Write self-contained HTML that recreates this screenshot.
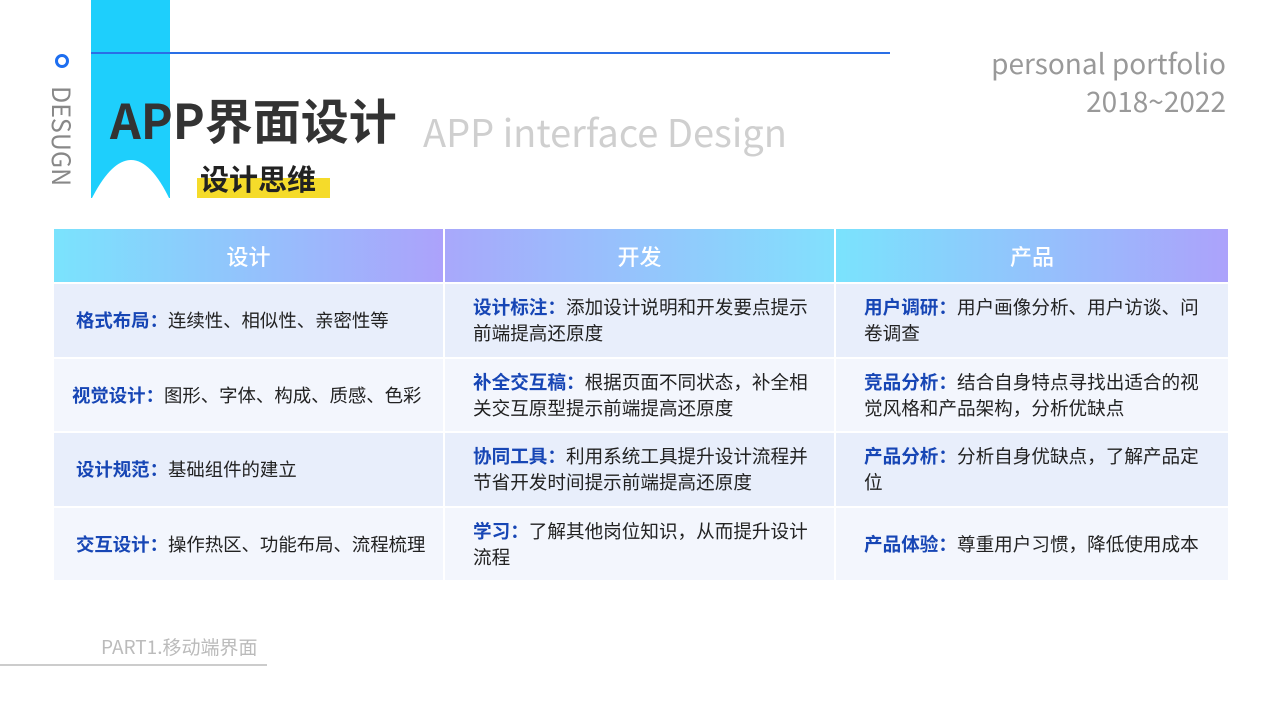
<!DOCTYPE html>
<html><head><meta charset="utf-8">
<style>
*{margin:0;padding:0;box-sizing:border-box}
body{width:1280px;height:720px;background:#fff;position:relative;overflow:hidden;font-family:"Noto Sans CJK SC","Liberation Sans",sans-serif}
.abs{position:absolute}
table{position:absolute;left:52px;top:227px;width:1176px;border-collapse:collapse;table-layout:fixed}
td,th{border:2px solid #fff;}
th{height:55px;color:#fff;font-size:22px;font-weight:500;text-align:center}
td{height:74.5px;font-size:18.6px;color:#222;line-height:26px;padding:0 24px 0 28px;vertical-align:middle}
td b{color:#1746b5;font-weight:700}
tr.a td{background:#e8eefb}
tr.b td{background:#f3f6fd}
td.c1{padding:0 6px 0 22px;font-size:18.4px}
</style></head><body>
<div class="abs" style="left:91px;top:0;width:79px;height:198px;background:#1ecffc"></div>
<svg class="abs" style="left:91px;top:150px" width="79" height="50"><path d="M0 50 Q20 10 40 10 Q60 10 79 50 Z" fill="#fff"/></svg>
<div class="abs" style="left:91px;top:52px;width:799px;height:2px;background:#2a6fe6"></div>
<div class="abs" style="left:55px;top:54px;width:14px;height:14px;border:3.5px solid #1d6ef0;border-radius:50%"></div>
<div class="abs" style="left:76px;top:86px;transform-origin:0 0;transform:rotate(90deg);font-size:25px;color:#888;line-height:28px">DESUGN</div>
<div class="abs" style="left:110px;top:83px;font-size:48px;font-weight:700;color:#333;line-height:70px">APP界面设计</div>
<div class="abs" style="left:423px;top:102px;font-size:38px;color:#cfcfcf;line-height:58px">APP interface Design</div>
<div class="abs" style="left:197px;top:178px;width:133px;height:20px;background:#f5db2a"></div>
<div class="abs" style="left:200px;top:157px;font-size:29px;font-weight:700;color:#222;line-height:42px">设计思维</div>
<div class="abs" style="right:54px;top:44px;font-size:28px;color:#999;text-align:right;line-height:38px">personal portfolio<br>2018~2022</div>
<table>
<tr>
<th style="width:391px;background:linear-gradient(90deg,#7ae3fd,#aca2fb)">设计</th>
<th style="width:391px;background:linear-gradient(90deg,#a8a8fb,#82e0fd)">开发</th>
<th style="width:394px;background:linear-gradient(90deg,#7ae3fd,#aca2fb)">产品</th>
</tr>
<tr class="a"><td class="c1"><b>格式布局：</b>连续性、相似性、亲密性等</td><td><b>设计标注：</b>添加设计说明和开发要点提示前端提高还原度</td><td><b>用户调研：</b>用户画像分析、用户访谈、问卷调查</td></tr>
<tr class="b"><td class="c1" style="padding-left:18px"><b>视觉设计：</b>图形、字体、构成、质感、色彩</td><td><b>补全交互稿：</b>根据页面不同状态，补全相关交互原型提示前端提高还原度</td><td><b>竞品分析：</b>结合自身特点寻找出适合的视觉风格和产品架构，分析优缺点</td></tr>
<tr class="a"><td class="c1"><b>设计规范：</b>基础组件的建立</td><td><b>协同工具：</b>利用系统工具提升设计流程并节省开发时间提示前端提高还原度</td><td><b>产品分析：</b>分析自身优缺点，了解产品定位</td></tr>
<tr class="b"><td class="c1"><b>交互设计：</b>操作热区、功能布局、流程梳理</td><td><b>学习：</b>了解其他岗位知识，从而提升设计流程</td><td><b>产品体验：</b>尊重用户习惯，降低使用成本</td></tr>
</table>
<div class="abs" style="left:101px;top:632px;font-size:19px;color:#bbb;line-height:30px">PART1.移动端界面</div>
<div class="abs" style="left:0;top:664px;width:267px;height:2px;background:#ccc"></div>
</body></html>
